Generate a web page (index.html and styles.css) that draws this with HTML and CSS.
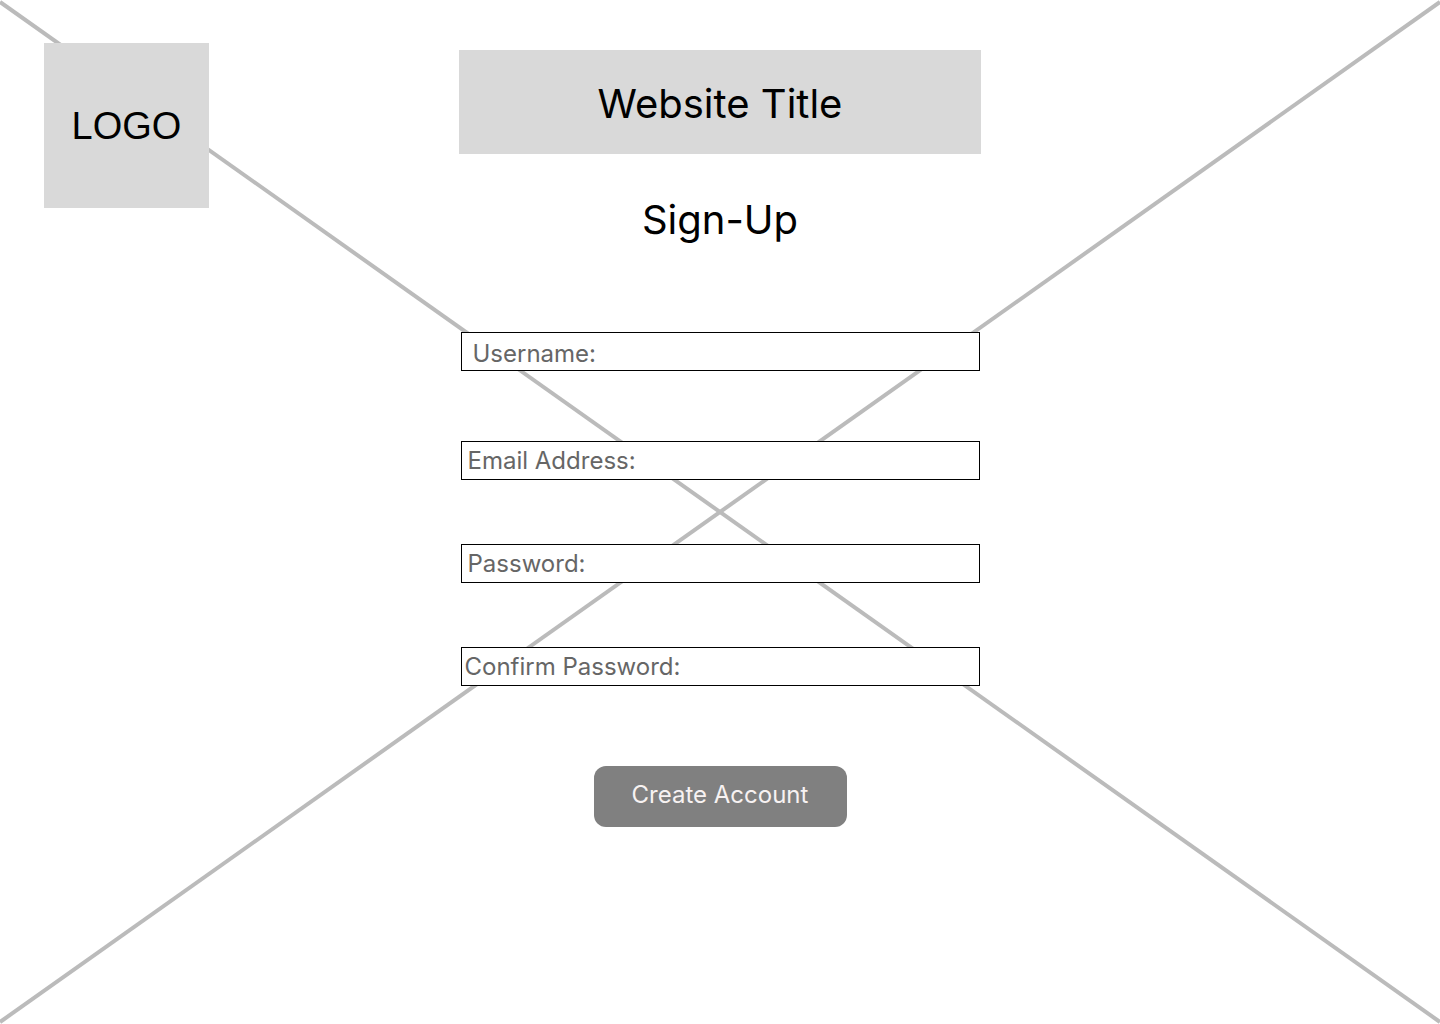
FILE: index.html
```html
<!DOCTYPE html>
<html lang="en">
  <head>
    <meta charset="UTF-8" />
    <meta name="viewport" content="width=device-width, initial-scale=1.0" />
    <title>Sign-Up</title>
    <link rel="stylesheet" href="styles.css">
  </head>
  <body>
    <div class="page">
      <!-- wireframe cross behind everything -->
      <svg class="cross" width="1440" height="1024" viewBox="0 0 1440 1024">
        <line x1="0" y1="2" x2="1440" y2="1022" />
        <line x1="0" y1="1022" x2="1440" y2="2" />
      </svg>

      <div class="logo">LOGO</div>
      <div class="site-title">Website Title</div>
      <h1 class="heading">Sign-Up</h1>

      <form class="form" onsubmit="return false">
        <input type="text" class="field field-user" placeholder="Username:" />
        <input type="email" class="field field-email" placeholder="Email Address:" />
        <input type="password" class="field field-pass" placeholder="Password:" />
        <input type="password" class="field field-confirm" placeholder="Confirm Password:" />
        <button class="create">Create Account</button>
      </form>
    </div>
  </body>
</html>
```

FILE: styles.css
```css
* {
  box-sizing: border-box;
}
body {
  margin: 0;
  background-color: #fff;
  font-family: Inter, "Liberation Sans", sans-serif;
}
.page {
  position: relative;
  width: 1440px;
  height: 1024px;
  overflow: hidden;

  display: grid;
  grid-template-columns: 1fr 522px 1fr;
  grid-template-rows: auto auto 1fr;
}
.cross {
  position: absolute;
  left: 0;
  top: 0;
  z-index: 0;
}
.cross line {
  stroke: #bbbbbb;
  stroke-width: 4;
}

.logo {
  position: relative;
  grid-column: 1;
  grid-row: 1 / 3;
  align-self: start;
  justify-self: start;
  margin: 43px 0 0 44px;
  width: 165px;
  height: 165px;
  background-color: #d9d9d9;

  display: flex;
  align-items: center;
  justify-content: center;
  padding-top: 2px;
  font-family: "Liberation Sans", Arial, sans-serif;
  font-size: 38px;
  color: #000;
}
.site-title {
  position: relative;
  grid-column: 2;
  grid-row: 1;
  margin-top: 50px;
  height: 104px;
  background-color: #d9d9d9;

  display: flex;
  align-items: center;
  justify-content: center;
  padding-top: 3px;
  font-size: 40px;
  color: #000;
}
.heading {
  position: relative;
  grid-column: 2;
  grid-row: 2;
  margin: 42px 0 0;
  font-size: 40px;
  line-height: 48px;
  font-weight: 400;
  text-align: center;
  color: #000;
}

.form {
  position: relative;
  grid-column: 2;
  grid-row: 3;
  margin: 88px 0 0;

  display: flex;
  flex-direction: column;
  align-items: center;
}
.field {
  width: 519px;
  height: 39px;
  border: 1px solid #000;
  border-radius: 0;
  outline: none;
  background-color: #fff;
  font-family: Inter, "Liberation Sans", sans-serif;
  font-size: 24px;
  color: #000;
}
.field::placeholder {
  color: #666;
  opacity: 1;
}
.field-user {
  padding: 3px 0 0 11px;
}
.field-email {
  margin-top: 70px;
  padding: 0 0 0 6px;
}
.field-pass {
  margin-top: 64px;
  padding: 0 0 0 6px;
}
.field-confirm {
  margin-top: 64px;
  padding: 0 0 0 3px;
}
.create {
  margin-top: 80px;
  width: 253px;
  height: 61px;
  padding: 0 0 4px;
  border: none;
  border-radius: 12px;
  background-color: #808080;
  color: #f7f2f2;
  font-family: Inter, "Liberation Sans", sans-serif;
  font-size: 24px;
  cursor: pointer;
}
```
